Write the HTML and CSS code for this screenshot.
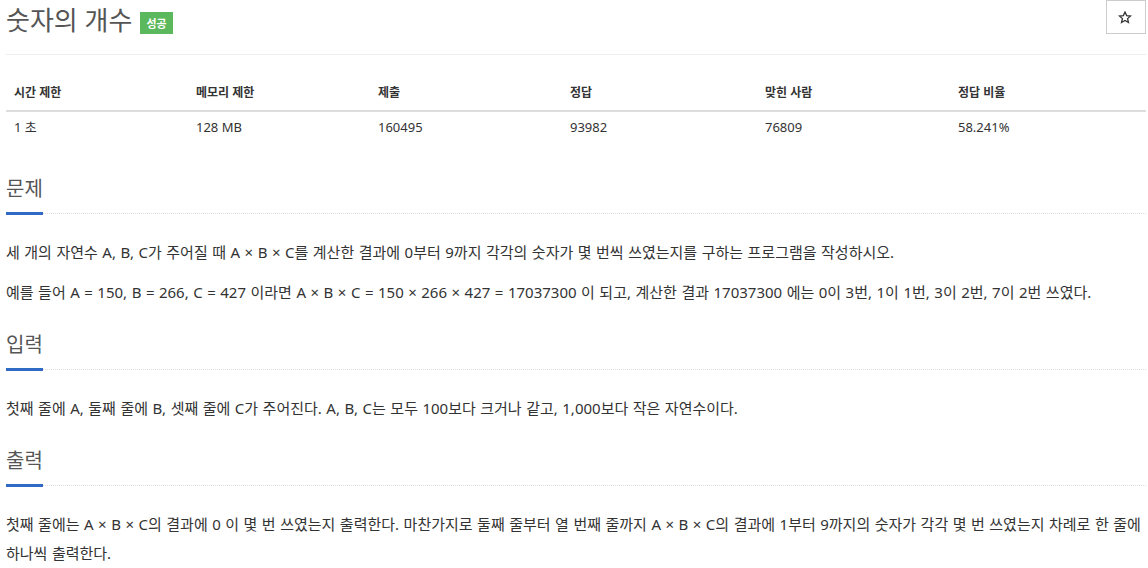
FILE: index.html
```html
<!DOCTYPE html>
<html lang="ko">
<head>
<meta charset="utf-8">
<title>숫자의 개수</title>
<link rel="stylesheet" href="styles.css">
</head>
<body>
<div class="page">
  <div class="title-row">
    <h1 class="title">숫자의 개수 <span class="badge">성공</span></h1>
    <button class="star" type="button" aria-label="즐겨찾기">
      <svg class="star-icon" viewBox="0 0 16 15" width="14" height="13"><path d="M8 1.2 L9.9 5.3 L14.4 5.8 L11 8.8 L12 13.3 L8 11 L4 13.3 L5 8.8 L1.6 5.8 L6.1 5.3 Z" fill="none" stroke="#333" stroke-width="1.5" stroke-linejoin="miter"/></svg>
    </button>
  </div>
  <table class="info">
    <colgroup>
      <col class="c1"><col class="c2"><col class="c3"><col class="c4"><col class="c5"><col class="c6">
    </colgroup>
    <thead>
      <tr>
        <th>시간 제한</th>
        <th>메모리 제한</th>
        <th>제출</th>
        <th>정답</th>
        <th>맞힌 사람</th>
        <th>정답 비율</th>
      </tr>
    </thead>
    <tbody>
      <tr>
        <td>1 초</td>
        <td>128 MB</td>
        <td>160495</td>
        <td>93982</td>
        <td>76809</td>
        <td>58.241%</td>
      </tr>
    </tbody>
  </table>

  <section class="sec">
    <div class="headline"><h2>문제</h2></div>
    <div class="text">
      <p>세 개의 자연수 A, B, C가 주어질 때 A × B × C를 계산한 결과에 0부터 9까지 각각의 숫자가 몇 번씩 쓰였는지를 구하는 프로그램을 작성하시오.</p>
      <p>예를 들어 A = 150, B = 266, C = 427 이라면 A × B × C = 150 × 266 × 427 = 17037300 이 되고, 계산한 결과 17037300 에는 0이 3번, 1이 1번, 3이 2번, 7이 2번 쓰였다.</p>
    </div>
  </section>

  <section class="sec">
    <div class="headline"><h2>입력</h2></div>
    <div class="text">
      <p>첫째 줄에 A, 둘째 줄에 B, 셋째 줄에 C가 주어진다. A, B, C는 모두 100보다 크거나 같고, 1,000보다 작은 자연수이다.</p>
    </div>
  </section>

  <section class="sec">
    <div class="headline"><h2>출력</h2></div>
    <div class="text">
      <p>첫째 줄에는 A × B × C의 결과에 0 이 몇 번 쓰였는지 출력한다. 마찬가지로 둘째 줄부터 열 번째 줄까지 A × B × C의 결과에 1부터 9까지의 숫자가 각각 몇 번 쓰였는지 차례로 한 줄에 하나씩 출력한다.</p>
    </div>
  </section>
</div>
</body>
</html>
```

FILE: styles.css
```css
* { box-sizing: border-box; }
html, body { margin: 0; padding: 0; background: #fff; }
body {
  font-family: "Noto Sans", "Noto Sans CJK KR", sans-serif;
  color: #333;
  font-size: 14px;
}
.page {
  width: 1140px;
  margin-left: 6px;
}
.title-row {
  display: flex;
  justify-content: space-between;
  align-items: flex-start;
  height: 55px;
  border-bottom: 1px solid #eee;
}
.title {
  margin: 0;
  font-size: 26px;
  font-weight: 400;
  line-height: 40px;
  color: #555;
  display: flex;
  align-items: center;
}
.badge {
  display: inline-block;
  margin-left: 8px;
  margin-top: 6px;
  background: #5cb85c;
  color: #fff;
  font-family: "Noto Sans CJK KR", sans-serif;
  font-size: 11px;
  font-weight: 700;
  line-height: 22px;
  height: 22px;
  padding: 0 6px;
}
.star {
  width: 40px;
  height: 34px;
  border: 1px solid #ccc;
  background: #fff;
  padding: 0;
  border-radius: 0;
  display: flex;
  align-items: center;
  justify-content: center;
}
.star-icon { display: block; margin-left: -3px; }
.info {
  width: 100%;
  margin-top: 21px;
  border-collapse: collapse;
  table-layout: fixed;
  font-size: 12px;
}
.info th, .info td {
  text-align: left;
  padding: 8px 8px;
  line-height: 18px;
}
.info th {
  font-weight: 700;
  color: #333;
  border-bottom: 2px solid #ddd;
}
.info td { font-size: 13px; padding-top: 6px; }
.c1 { width: 182px; }
.c2 { width: 182px; }
.c3 { width: 192px; }
.c4 { width: 195px; }
.c5 { width: 193px; }
.c6 { width: 196px; }
.sec { margin-top: 31px; }
.sec + .sec { margin-top: 24px; }
.headline {
  display: flex;
  border-bottom: 1px dotted #ddd;
}
.headline h2 {
  margin: 0 0 -2px 0;
  font-size: 20px;
  font-weight: 400;
  line-height: 28px;
  color: #555;
  padding-bottom: 9px;
  border-bottom: 3px solid #2f6bc4;
}
.text { padding-top: 24px; }
.text p {
  margin: 0 0 11px 0;
  font-size: 15px;
  line-height: 29px;
  color: #333;
  word-spacing: 0.6px;
  word-break: keep-all;
}
.text p:last-child { margin-bottom: 0; }
```
